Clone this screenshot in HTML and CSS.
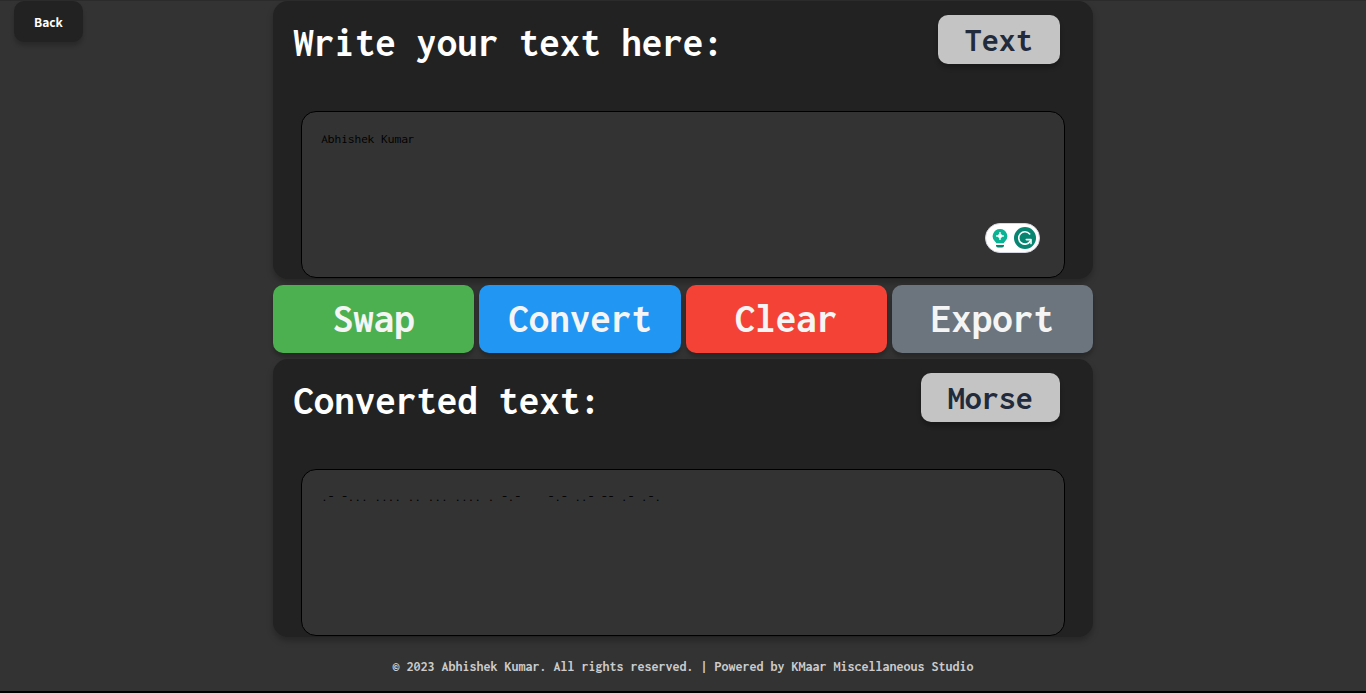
FILE: index.html
```html
<!DOCTYPE html>
<html lang="en">
<head>
<meta charset="utf-8">
<meta name="viewport" content="width=device-width, initial-scale=1">
<title>Morse Converter</title>
<link rel="stylesheet" href="styles.css">
</head>
<body>
<div class="page">
  <nav class="side"><a class="back" href="#">Back</a></nav>
  <main class="converter">
    <section class="panel">
      <div class="panel-head">
        <label class="title" for="source">Write your text here:</label>
        <button class="mode" type="button">Text</button>
      </div>
      <div class="field">
        <textarea class="box" id="source" spellcheck="false">Abhishek Kumar</textarea>
        <div class="assistant">
          <svg class="bulb" viewBox="0 0 16 20" aria-hidden="true">
            <path fill="#0bb394" d="M8 1a7.300 7.300 0 0 0-4.800 12.800c.6.5.9.800 1.100 1.400h7.400c.2-.6.5-.9 1.100-1.400A7.300 7.300 0 0 0 8 1z"/>
            <path fill="#fff" d="M8 4c.5 2.600 1.400 3.500 4 4-2.600.5-3.500 1.400-4 4-.5-2.600-1.400-3.500-4-4 2.600-.5 3.500-1.400 4-4z" stroke="#fff" stroke-width=".7"/>
            <path fill="#078571" d="M4 17h8v.6a2 2 0 0 1-2 2H6a2 2 0 0 1-2-2z"/>
          </svg>
          <svg class="gmark" viewBox="0 0 22 22" aria-hidden="true">
            <circle cx="11" cy="11" r="11" fill="#078571"/>
            <path fill="none" stroke="#fff" stroke-width="1.600" stroke-linecap="round" stroke-linejoin="round" d="M15.700 7A6.200 6.200 0 1 0 16.400 13.800"/>
            <path fill="none" stroke="#fff" stroke-width="1.600" stroke-linecap="round" stroke-linejoin="round" d="M12.300 12.600h4.700v4"/>
          </svg>
        </div>
      </div>
    </section>
    <div class="actions">
      <button class="action swap" type="button">Swap</button>
      <button class="action convert" type="button">Convert</button>
      <button class="action clear" type="button">Clear</button>
      <button class="action export" type="button">Export</button>
    </div>
    <section class="panel">
      <div class="panel-head">
        <label class="title" for="result">Converted text:</label>
        <button class="mode" type="button">Morse</button>
      </div>
      <div class="field">
        <textarea class="box" id="result" spellcheck="false" readonly>.- -... .... .. ... .... . -.-    -.- ..- -- .- .-.</textarea>
      </div>
    </section>
  </main>
</div>
<footer class="footer">© 2023 Abhishek Kumar. All rights reserved. | Powered by KMaar Miscellaneous Studio</footer>
</body>
</html>
```
FILE: styles.css
```css
* {
  box-sizing: border-box;
}

body {
  display: flex;
  flex-direction: column;
  min-height: 100vh;
  margin: 0;
  border-top: 1px solid #2b2b2b;
  border-bottom: 2px solid #000;
  background: #333;
  font-family: Inconsolata, "DejaVu Sans Mono", "Liberation Mono", monospace;
}

button {
  border: 0;
  border-radius: 10px;
  font-family: inherit;
  font-weight: bold;
  cursor: pointer;
}

.page {
  display: grid;
  grid-template-columns: 1fr 60% 1fr;
}

.side {
  padding-left: 14px;
}

.back {
  display: inline-block;
  padding: 0 20px;
  border-radius: 10px;
  background: #222;
  box-shadow: 0 4px 4px rgba(0, 0, 0, 0.2);
  color: #fff;
  font: bold 12px/41px "Noto Sans CJK SC", "Noto Sans", sans-serif;
  text-decoration: none;
}

.converter {
  display: flex;
  flex-direction: column;
  gap: 6px;
}

.panel {
  padding-bottom: 1px;
  border-radius: 15px;
  background: #222;
  box-shadow: 0 4px 6px rgba(0, 0, 0, 0.25);
}

.panel-head {
  display: flex;
  justify-content: space-between;
  align-items: flex-start;
  height: 110px;
  padding: 14px 33px 0 20px;
}

.title {
  color: #fff;
  font-size: 41px;
  font-weight: bold;
  line-height: 56px;
}

.mode {
  padding: 0 27px;
  background: #c4c4c4;
  box-shadow: 0 4px 4px rgba(0, 0, 0, 0.25);
  color: #222b3c;
  font-size: 34px;
  line-height: 49px;
}

.field {
  position: relative;
  margin: 0 28px;
}

.box {
  display: block;
  width: 100%;
  height: 167px;
  padding: 20px 19px;
  border: 1px solid #000;
  border-radius: 15px;
  outline: 0;
  background: #333;
  color: #000;
  font-family: inherit;
  line-height: 14px;
  resize: none;
}

.assistant {
  position: absolute;
  right: 25px;
  bottom: 25px;
  display: flex;
  justify-content: space-between;
  align-items: center;
  width: 55px;
  height: 30px;
  padding: 0 3px 0 6px;
  border: 1px solid #d5d7e0;
  border-radius: 15px;
  background: #fff;
}

.bulb {
  width: 16px;
  height: 20px;
}

.gmark {
  width: 22px;
  height: 22px;
}

.actions {
  display: grid;
  grid-template-columns: repeat(4, 1fr);
  gap: 5px;
}

.action {
  padding: 0;
  box-shadow: 0 4px 4px rgba(0, 0, 0, 0.25);
  color: #f5f5f5;
  font-size: 41px;
  line-height: 68px;
}

.swap {
  background: #4caf50;
}

.convert {
  background: #2196f3;
}

.clear {
  background: #f44336;
}

.export {
  background: #6c757d;
}

.footer {
  padding: 20px 16px 0;
  color: #ccc;
  font-size: 14px;
  font-weight: bold;
  line-height: 20px;
  text-align: center;
}
```
